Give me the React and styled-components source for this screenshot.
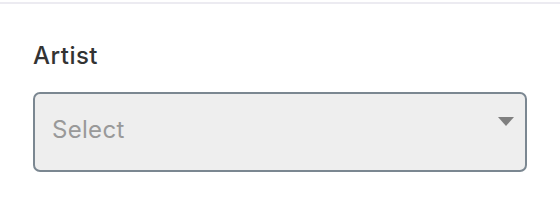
import React from "react";
import styled, { createGlobalStyle } from "styled-components";

const GlobalStyle = createGlobalStyle`
  html, body {
    margin: 0;
    padding: 0;
    background: #ffffff;
  }
  body {
    font-family: Inter, "Liberation Sans", Arial, sans-serif;
  }
`;

const Page = styled.div`
  padding-top: 2px;
`;

const Divider = styled.div`
  height: 2px;
  background: #ecebf1;
`;

const Field = styled.div`
  display: flex;
  flex-direction: column;
  padding: 38px 33px 0 33px;
`;

const Label = styled.label`
  font-size: 24px;
  font-weight: 500;
  line-height: 28px;
  letter-spacing: 0.5px;
  color: #333333;
  margin-bottom: 22px;
`;

const SelectBox = styled.div`
  position: relative;
  box-sizing: border-box;
  height: 80px;
  width: 494px;
  border: 2px solid #7b8791;
  border-radius: 7px;
  background: #eeeeee;
  display: flex;
  align-items: flex-start;
  padding: 22px 0 0 17px;
`;

const Placeholder = styled.span`
  font-size: 24px;
  line-height: 28px;
  letter-spacing: 0.3px;
  color: #999999;
`;

const Caret = styled.svg`
  position: absolute;
  top: 23px;
  right: 11px;
`;

export default function App() {
  return (
    <Page>
      <GlobalStyle />
      <Divider />
      <Field>
        <Label>Artist</Label>
        <SelectBox>
          <Placeholder>Select</Placeholder>
          <Caret width="16" height="9" viewBox="0 0 16 9">
            <polygon points="0,0 16,0 8,9" fill="#7f7f7f" />
          </Caret>
        </SelectBox>
      </Field>
    </Page>
  );
}
